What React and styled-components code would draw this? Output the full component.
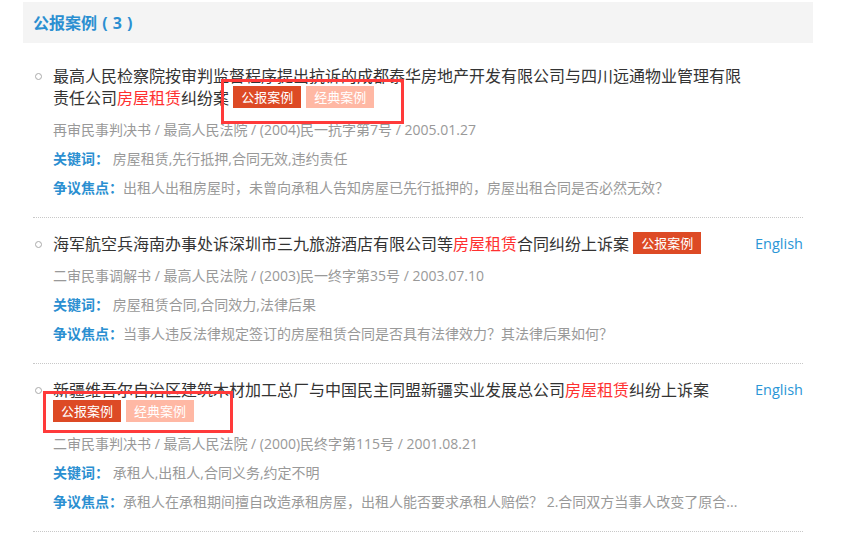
import React from 'react';
import styled, { createGlobalStyle } from 'styled-components';

const cases = [
    {
        title: ['最高人民检察院按审判监督程序提出抗诉的成都泰华房地产开发有限公司与四川远通物业管理有限责任公司', '房屋租赁', '纠纷案'],
        tags: ['gongbao', 'jingdian'],
        mark: { left: -12, top: -7, width: 183, height: 45 },
        english: false,
        meta: '再审民事判决书 / 最高人民法院 / (2004)民一抗字第7号 / 2005.01.27',
        keywords: '房屋租赁,先行抵押,合同无效,违约责任',
        focus: '出租人出租房屋时，未曾向承租人告知房屋已先行抵押的，房屋出租合同是否必然无效？',
    },
    {
        title: ['海军航空兵海南办事处诉深圳市三九旅游酒店有限公司等', '房屋租赁', '合同纠纷上诉案'],
        tags: ['gongbao'],
        english: true,
        meta: '二审民事调解书 / 最高人民法院 / (2003)民一终字第35号 / 2003.07.10',
        keywords: '房屋租赁合同,合同效力,法律后果',
        focus: '当事人违反法律规定签订的房屋租赁合同是否具有法律效力？其法律后果如何？',
    },
    {
        title: ['新疆维吾尔自治区建筑木材加工总厂与中国民主同盟新疆实业发展总公司', '房屋租赁', '纠纷上诉案'],
        tags: ['gongbao', 'jingdian'],
        mark: { left: -10, top: -9, width: 190, height: 42 },
        english: true,
        meta: '二审民事判决书 / 最高人民法院 / (2000)民终字第115号 / 2001.08.21',
        keywords: '承租人,出租人,合同义务,约定不明',
        focus: '承租人在承租期间擅自改造承租房屋，出租人能否要求承租人赔偿？ 2.合同双方当事人改变了原合...',
    },
];

const tagText = { gongbao: '公报案例', jingdian: '经典案例' };

const App = () => (
    <>
        <GlobalStyle />
        <Page>
            <Header>
                <HeaderTitle>公报案例 ( 3 )</HeaderTitle>
            </Header>
            <List>
                {cases.map((c, i) => (
                    <Item key={i}>
                        <Bullet />
                        <Body>
                            <Title>
                                {c.title[0]}
                                <Hit>{c.title[1]}</Hit>
                                {c.title[2]}{' '}
                                <TagGroup>
                                    {c.tags.map(t => (
                                        <Tag key={t} $kind={t}>{tagText[t]}</Tag>
                                    ))}
                                    {c.mark && (
                                        <Mark
                                            style={{
                                                left: c.mark.left,
                                                top: c.mark.top,
                                                width: c.mark.width,
                                                height: c.mark.height,
                                            }}
                                        />
                                    )}
                                </TagGroup>
                            </Title>
                            <Meta>{c.meta}</Meta>
                            <InfoLine>
                                <Label>关键词：</Label> {c.keywords}
                            </InfoLine>
                            <InfoLine>
                                <Label>争议焦点：</Label>{c.focus}
                            </InfoLine>
                        </Body>
                        <English>{c.english ? 'English' : ''}</English>
                    </Item>
                ))}
            </List>
        </Page>
    </>
);

export default App;

const GlobalStyle = createGlobalStyle`
    body {
        margin: 0;
        background: #fff;
        font-family: "Open Sans", "Noto Sans CJK SC", sans-serif;
    }
`;

const Page = styled.div`
    width: 790px;
    padding: 2px 0 0 23px;
`;

const Header = styled.div`
    height: 41px;
    background-color: #f4f4f4;
    display: flex;
    align-items: center;
    padding-left: 10px;
`;

const HeaderTitle = styled.h2`
    margin: 0;
    font-size: 16px;
    font-weight: bold;
    color: #2b8fd1;
    line-height: 20px;
    word-spacing: 1px;
`;

const List = styled.div`
    margin: 7px 10px 0;
`;

const Item = styled.div`
    display: grid;
    grid-template-columns: 20px 1fr 58px;
    padding: 15px 0;
    border-bottom: 1px dotted #c8c8c8;
`;

const Bullet = styled.span`
    width: 5px;
    height: 5px;
    margin: 8px 0 0 2px;
    border: 1px solid #aaa;
    border-radius: 50%;
`;

const Body = styled.div`
    min-width: 0;
`;

const Title = styled.div`
    font-size: 16px;
    line-height: 22px;
    color: #333;
`;

const Hit = styled.span`
    color: #ff3030;
`;

const TagGroup = styled.span`
    position: relative;
    display: inline-flex;
    gap: 5px;
    vertical-align: top;
    margin-top: -1px;
    white-space: nowrap;
`;

const Tag = styled.span`
    display: inline-block;
    width: 68px;
    height: 22px;
    line-height: 22px;
    text-align: center;
    font-size: 13px;
    color: #fff;
    background-color: ${p => (p.$kind === 'gongbao' ? '#dd4a25' : '#ffb8a4')};
`;

const Mark = styled.span`
    position: absolute;
    box-sizing: border-box;
    border: 3px solid #ff3a3a;
    pointer-events: none;
`;

const Meta = styled.div`
    margin-top: 6px;
    font-size: 14px;
    line-height: 29px;
    color: #999;
`;

const InfoLine = styled.div`
    font-size: 14px;
    line-height: 29px;
    color: #999;
    white-space: nowrap;
`;

const Label = styled.span`
    font-weight: bold;
    color: #2b8fd1;
`;

const English = styled.span`
    font-size: 14.5px;
    line-height: 22px;
    color: #2a96d6;
    text-align: right;
`;
